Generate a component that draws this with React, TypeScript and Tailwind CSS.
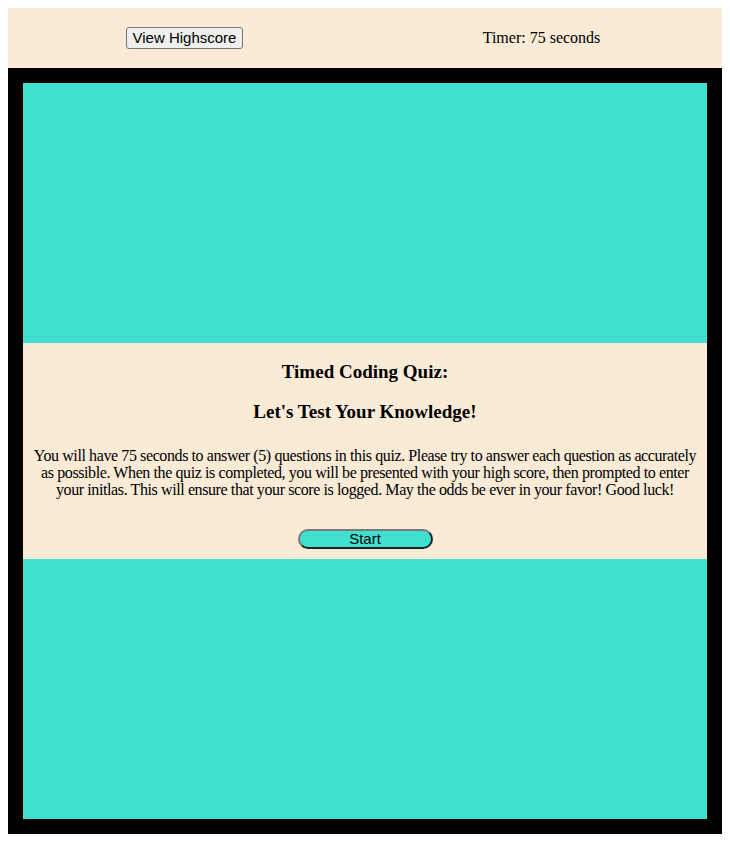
export default function App() {
    return (
        <div className="bg-white p-2 font-['Liberation_Serif','Times_New_Roman',serif] text-black">
            {/* Header */}
            <header className="grid h-[60px] grid-cols-2 items-center bg-[#faebd7]">
                <div className="flex justify-center pr-[4px]">
                    <button className="h-[22px] rounded-[3px] border border-[#767676] bg-[#efefef] px-[6px] font-['Liberation_Sans',Arial,sans-serif] text-[15px] leading-[18px]">
                        View Highscore
                    </button>
                </div>
                <div className="flex justify-center pr-[4px] text-[16px] leading-[18px]">
                    Timer: 75 seconds
                </div>
            </header>

            {/* Quiz box */}
            <main className="border-[15px] border-black">
                <div className="h-[260px] bg-[#40e0d0]" />

                <section className="flex h-[216px] flex-col items-center bg-[#faebd7] px-[4px] pt-[18px] text-center">
                    <h3 className="text-[19px] font-bold leading-[22px]">Timed Coding Quiz:</h3>
                    <h3 className="mt-[18px] text-[19px] font-bold leading-[22px]">Let's Test Your Knowledge!</h3>
                    <p className="mt-[24px] whitespace-nowrap text-[16px] leading-[17px] tracking-[-0.4px]">
                        You will have 75 seconds to answer (5) questions in this quiz. Please try to answer each question as accurately
                        <br />
                        as possible. When the quiz is completed, you will be presented with your high score, then prompted to enter
                        <br />
                        your initlas. This will ensure that your score is logged. May the odds be ever in your favor! Good luck!
                    </p>
                    <button className="mt-[31px] h-[20px] w-[135px] rounded-full border-2 border-t-[#7a7a7a] border-l-[#7a7a7a] border-r-[#222] border-b-[#222] bg-[#40e0d0] font-['Liberation_Sans',Arial,sans-serif] text-[15px] leading-[16px]">
                        Start
                    </button>
                </section>

                <div className="h-[260px] bg-[#40e0d0]" />
            </main>
        </div>
    );
}
